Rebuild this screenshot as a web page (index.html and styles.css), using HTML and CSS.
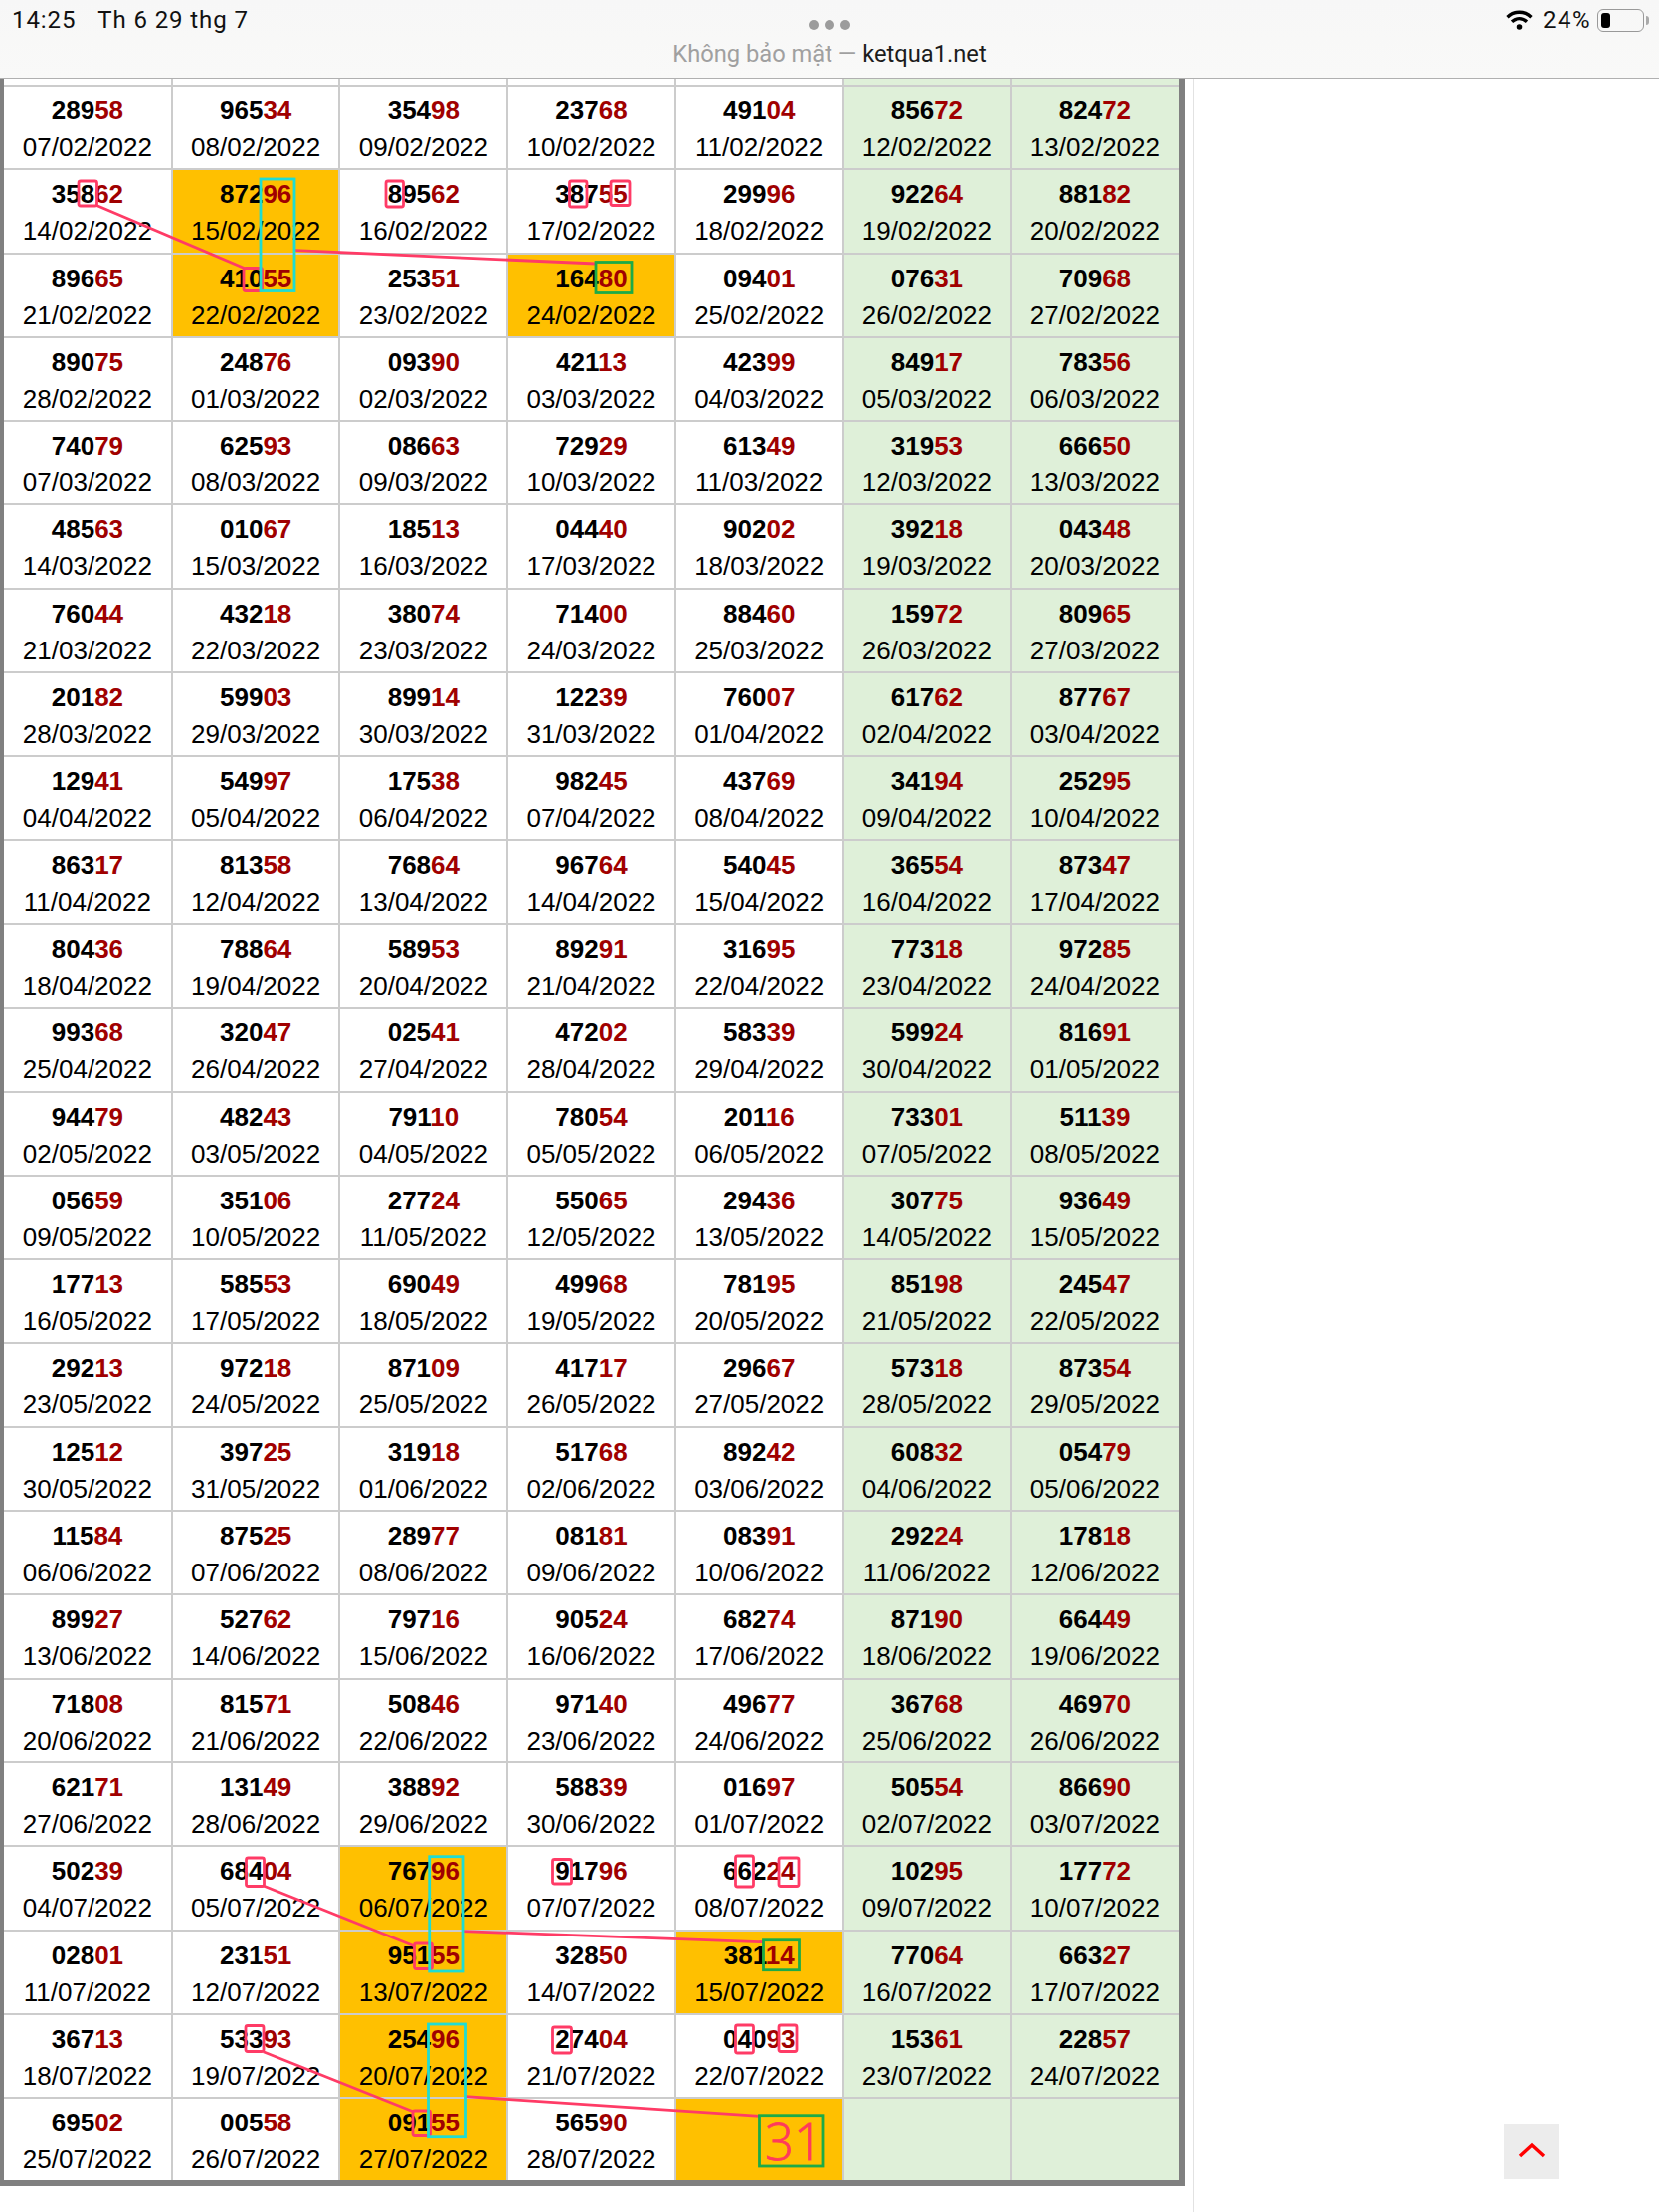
FILE: index.html
```html
<!DOCTYPE html>
<html lang="vi">
<head>
<meta charset="utf-8">
<title>ketqua1.net</title>
<link rel="stylesheet" href="styles.css">
</head>
<body>
<header class="bar">
  <div class="clock"><span>14:25</span><span>Th 6 29 thg 7</span></div>
  <div class="center">
    <div class="dots"><i></i><i></i><i></i></div>
    <div class="url">Không bảo mật — <strong>ketqua1.net</strong></div>
  </div>
  <div class="status">
    <svg class="wifi" width="27" height="20" viewBox="0 0 27 20"><path d="M1.5 7.2C8.5.6 18.5.6 25.5 7.2" /><path d="M6 11.8c4.500-4.300 10.500-4.300 15 0" /><circle cx="13.500" cy="17" r="2.800"/></svg>
    <span>24%</span>
    <div class="battery"><i></i></div>
    <div class="nub"></div>
  </div>
</header>
<main class="page">
<div class="board">
<div class="c s"></div><div class="c s"></div><div class="c s"></div><div class="c s"></div><div class="c s"></div><div class="c s g"></div><div class="c s g"></div>
<div class="c"><b>289<i>58</i></b><span>07/02/2022</span></div><div class="c"><b>965<i>34</i></b><span>08/02/2022</span></div><div class="c"><b>354<i>98</i></b><span>09/02/2022</span></div><div class="c"><b>237<i>68</i></b><span>10/02/2022</span></div><div class="c"><b>491<i>04</i></b><span>11/02/2022</span></div><div class="c g"><b>856<i>72</i></b><span>12/02/2022</span></div><div class="c g"><b>824<i>72</i></b><span>13/02/2022</span></div>
<div class="c"><b>358<i>62</i></b><span>14/02/2022</span></div><div class="c o"><b>872<i>96</i></b><span>15/02/2022</span></div><div class="c"><b>895<i>62</i></b><span>16/02/2022</span></div><div class="c"><b>387<i>55</i></b><span>17/02/2022</span></div><div class="c"><b>299<i>96</i></b><span>18/02/2022</span></div><div class="c g"><b>922<i>64</i></b><span>19/02/2022</span></div><div class="c g"><b>881<i>82</i></b><span>20/02/2022</span></div>
<div class="c"><b>896<i>65</i></b><span>21/02/2022</span></div><div class="c o"><b>410<i>55</i></b><span>22/02/2022</span></div><div class="c"><b>253<i>51</i></b><span>23/02/2022</span></div><div class="c o"><b>164<i>80</i></b><span>24/02/2022</span></div><div class="c"><b>094<i>01</i></b><span>25/02/2022</span></div><div class="c g"><b>076<i>31</i></b><span>26/02/2022</span></div><div class="c g"><b>709<i>68</i></b><span>27/02/2022</span></div>
<div class="c"><b>890<i>75</i></b><span>28/02/2022</span></div><div class="c"><b>248<i>76</i></b><span>01/03/2022</span></div><div class="c"><b>093<i>90</i></b><span>02/03/2022</span></div><div class="c"><b>421<i>13</i></b><span>03/03/2022</span></div><div class="c"><b>423<i>99</i></b><span>04/03/2022</span></div><div class="c g"><b>849<i>17</i></b><span>05/03/2022</span></div><div class="c g"><b>783<i>56</i></b><span>06/03/2022</span></div>
<div class="c"><b>740<i>79</i></b><span>07/03/2022</span></div><div class="c"><b>625<i>93</i></b><span>08/03/2022</span></div><div class="c"><b>086<i>63</i></b><span>09/03/2022</span></div><div class="c"><b>729<i>29</i></b><span>10/03/2022</span></div><div class="c"><b>613<i>49</i></b><span>11/03/2022</span></div><div class="c g"><b>319<i>53</i></b><span>12/03/2022</span></div><div class="c g"><b>666<i>50</i></b><span>13/03/2022</span></div>
<div class="c"><b>485<i>63</i></b><span>14/03/2022</span></div><div class="c"><b>010<i>67</i></b><span>15/03/2022</span></div><div class="c"><b>185<i>13</i></b><span>16/03/2022</span></div><div class="c"><b>044<i>40</i></b><span>17/03/2022</span></div><div class="c"><b>902<i>02</i></b><span>18/03/2022</span></div><div class="c g"><b>392<i>18</i></b><span>19/03/2022</span></div><div class="c g"><b>043<i>48</i></b><span>20/03/2022</span></div>
<div class="c"><b>760<i>44</i></b><span>21/03/2022</span></div><div class="c"><b>432<i>18</i></b><span>22/03/2022</span></div><div class="c"><b>380<i>74</i></b><span>23/03/2022</span></div><div class="c"><b>714<i>00</i></b><span>24/03/2022</span></div><div class="c"><b>884<i>60</i></b><span>25/03/2022</span></div><div class="c g"><b>159<i>72</i></b><span>26/03/2022</span></div><div class="c g"><b>809<i>65</i></b><span>27/03/2022</span></div>
<div class="c"><b>201<i>82</i></b><span>28/03/2022</span></div><div class="c"><b>599<i>03</i></b><span>29/03/2022</span></div><div class="c"><b>899<i>14</i></b><span>30/03/2022</span></div><div class="c"><b>122<i>39</i></b><span>31/03/2022</span></div><div class="c"><b>760<i>07</i></b><span>01/04/2022</span></div><div class="c g"><b>617<i>62</i></b><span>02/04/2022</span></div><div class="c g"><b>877<i>67</i></b><span>03/04/2022</span></div>
<div class="c"><b>129<i>41</i></b><span>04/04/2022</span></div><div class="c"><b>549<i>97</i></b><span>05/04/2022</span></div><div class="c"><b>175<i>38</i></b><span>06/04/2022</span></div><div class="c"><b>982<i>45</i></b><span>07/04/2022</span></div><div class="c"><b>437<i>69</i></b><span>08/04/2022</span></div><div class="c g"><b>341<i>94</i></b><span>09/04/2022</span></div><div class="c g"><b>252<i>95</i></b><span>10/04/2022</span></div>
<div class="c"><b>863<i>17</i></b><span>11/04/2022</span></div><div class="c"><b>813<i>58</i></b><span>12/04/2022</span></div><div class="c"><b>768<i>64</i></b><span>13/04/2022</span></div><div class="c"><b>967<i>64</i></b><span>14/04/2022</span></div><div class="c"><b>540<i>45</i></b><span>15/04/2022</span></div><div class="c g"><b>365<i>54</i></b><span>16/04/2022</span></div><div class="c g"><b>873<i>47</i></b><span>17/04/2022</span></div>
<div class="c"><b>804<i>36</i></b><span>18/04/2022</span></div><div class="c"><b>788<i>64</i></b><span>19/04/2022</span></div><div class="c"><b>589<i>53</i></b><span>20/04/2022</span></div><div class="c"><b>892<i>91</i></b><span>21/04/2022</span></div><div class="c"><b>316<i>95</i></b><span>22/04/2022</span></div><div class="c g"><b>773<i>18</i></b><span>23/04/2022</span></div><div class="c g"><b>972<i>85</i></b><span>24/04/2022</span></div>
<div class="c"><b>993<i>68</i></b><span>25/04/2022</span></div><div class="c"><b>320<i>47</i></b><span>26/04/2022</span></div><div class="c"><b>025<i>41</i></b><span>27/04/2022</span></div><div class="c"><b>472<i>02</i></b><span>28/04/2022</span></div><div class="c"><b>583<i>39</i></b><span>29/04/2022</span></div><div class="c g"><b>599<i>24</i></b><span>30/04/2022</span></div><div class="c g"><b>816<i>91</i></b><span>01/05/2022</span></div>
<div class="c"><b>944<i>79</i></b><span>02/05/2022</span></div><div class="c"><b>482<i>43</i></b><span>03/05/2022</span></div><div class="c"><b>791<i>10</i></b><span>04/05/2022</span></div><div class="c"><b>780<i>54</i></b><span>05/05/2022</span></div><div class="c"><b>201<i>16</i></b><span>06/05/2022</span></div><div class="c g"><b>733<i>01</i></b><span>07/05/2022</span></div><div class="c g"><b>511<i>39</i></b><span>08/05/2022</span></div>
<div class="c"><b>056<i>59</i></b><span>09/05/2022</span></div><div class="c"><b>351<i>06</i></b><span>10/05/2022</span></div><div class="c"><b>277<i>24</i></b><span>11/05/2022</span></div><div class="c"><b>550<i>65</i></b><span>12/05/2022</span></div><div class="c"><b>294<i>36</i></b><span>13/05/2022</span></div><div class="c g"><b>307<i>75</i></b><span>14/05/2022</span></div><div class="c g"><b>936<i>49</i></b><span>15/05/2022</span></div>
<div class="c"><b>177<i>13</i></b><span>16/05/2022</span></div><div class="c"><b>585<i>53</i></b><span>17/05/2022</span></div><div class="c"><b>690<i>49</i></b><span>18/05/2022</span></div><div class="c"><b>499<i>68</i></b><span>19/05/2022</span></div><div class="c"><b>781<i>95</i></b><span>20/05/2022</span></div><div class="c g"><b>851<i>98</i></b><span>21/05/2022</span></div><div class="c g"><b>245<i>47</i></b><span>22/05/2022</span></div>
<div class="c"><b>292<i>13</i></b><span>23/05/2022</span></div><div class="c"><b>972<i>18</i></b><span>24/05/2022</span></div><div class="c"><b>871<i>09</i></b><span>25/05/2022</span></div><div class="c"><b>417<i>17</i></b><span>26/05/2022</span></div><div class="c"><b>296<i>67</i></b><span>27/05/2022</span></div><div class="c g"><b>573<i>18</i></b><span>28/05/2022</span></div><div class="c g"><b>873<i>54</i></b><span>29/05/2022</span></div>
<div class="c"><b>125<i>12</i></b><span>30/05/2022</span></div><div class="c"><b>397<i>25</i></b><span>31/05/2022</span></div><div class="c"><b>319<i>18</i></b><span>01/06/2022</span></div><div class="c"><b>517<i>68</i></b><span>02/06/2022</span></div><div class="c"><b>892<i>42</i></b><span>03/06/2022</span></div><div class="c g"><b>608<i>32</i></b><span>04/06/2022</span></div><div class="c g"><b>054<i>79</i></b><span>05/06/2022</span></div>
<div class="c"><b>115<i>84</i></b><span>06/06/2022</span></div><div class="c"><b>875<i>25</i></b><span>07/06/2022</span></div><div class="c"><b>289<i>77</i></b><span>08/06/2022</span></div><div class="c"><b>081<i>81</i></b><span>09/06/2022</span></div><div class="c"><b>083<i>91</i></b><span>10/06/2022</span></div><div class="c g"><b>292<i>24</i></b><span>11/06/2022</span></div><div class="c g"><b>178<i>18</i></b><span>12/06/2022</span></div>
<div class="c"><b>899<i>27</i></b><span>13/06/2022</span></div><div class="c"><b>527<i>62</i></b><span>14/06/2022</span></div><div class="c"><b>797<i>16</i></b><span>15/06/2022</span></div><div class="c"><b>905<i>24</i></b><span>16/06/2022</span></div><div class="c"><b>682<i>74</i></b><span>17/06/2022</span></div><div class="c g"><b>871<i>90</i></b><span>18/06/2022</span></div><div class="c g"><b>664<i>49</i></b><span>19/06/2022</span></div>
<div class="c"><b>718<i>08</i></b><span>20/06/2022</span></div><div class="c"><b>815<i>71</i></b><span>21/06/2022</span></div><div class="c"><b>508<i>46</i></b><span>22/06/2022</span></div><div class="c"><b>971<i>40</i></b><span>23/06/2022</span></div><div class="c"><b>496<i>77</i></b><span>24/06/2022</span></div><div class="c g"><b>367<i>68</i></b><span>25/06/2022</span></div><div class="c g"><b>469<i>70</i></b><span>26/06/2022</span></div>
<div class="c"><b>621<i>71</i></b><span>27/06/2022</span></div><div class="c"><b>131<i>49</i></b><span>28/06/2022</span></div><div class="c"><b>388<i>92</i></b><span>29/06/2022</span></div><div class="c"><b>588<i>39</i></b><span>30/06/2022</span></div><div class="c"><b>016<i>97</i></b><span>01/07/2022</span></div><div class="c g"><b>505<i>54</i></b><span>02/07/2022</span></div><div class="c g"><b>866<i>90</i></b><span>03/07/2022</span></div>
<div class="c"><b>502<i>39</i></b><span>04/07/2022</span></div><div class="c"><b>684<i>04</i></b><span>05/07/2022</span></div><div class="c o"><b>767<i>96</i></b><span>06/07/2022</span></div><div class="c"><b>917<i>96</i></b><span>07/07/2022</span></div><div class="c"><b>662<i>24</i></b><span>08/07/2022</span></div><div class="c g"><b>102<i>95</i></b><span>09/07/2022</span></div><div class="c g"><b>177<i>72</i></b><span>10/07/2022</span></div>
<div class="c"><b>028<i>01</i></b><span>11/07/2022</span></div><div class="c"><b>231<i>51</i></b><span>12/07/2022</span></div><div class="c o"><b>951<i>55</i></b><span>13/07/2022</span></div><div class="c"><b>328<i>50</i></b><span>14/07/2022</span></div><div class="c o"><b>381<i>14</i></b><span>15/07/2022</span></div><div class="c g"><b>770<i>64</i></b><span>16/07/2022</span></div><div class="c g"><b>663<i>27</i></b><span>17/07/2022</span></div>
<div class="c"><b>367<i>13</i></b><span>18/07/2022</span></div><div class="c"><b>533<i>93</i></b><span>19/07/2022</span></div><div class="c o"><b>254<i>96</i></b><span>20/07/2022</span></div><div class="c"><b>274<i>04</i></b><span>21/07/2022</span></div><div class="c"><b>040<i>93</i></b><span>22/07/2022</span></div><div class="c g"><b>153<i>61</i></b><span>23/07/2022</span></div><div class="c g"><b>228<i>57</i></b><span>24/07/2022</span></div>
<div class="c"><b>695<i>02</i></b><span>25/07/2022</span></div><div class="c"><b>005<i>58</i></b><span>26/07/2022</span></div><div class="c o"><b>091<i>55</i></b><span>27/07/2022</span></div><div class="c"><b>565<i>90</i></b><span>28/07/2022</span></div><div class="c o"></div><div class="c g"></div><div class="c g"></div>
</div>
</main>
<svg class="marks" width="1668" height="2224" viewBox="0 0 1668 2224">
  <g class="pink">
    <rect x="79" y="182" width="18.500" height="25" rx="2"/>
    <rect x="245" y="269.500" width="18.500" height="23" rx="2"/>
    <rect x="388" y="182" width="17.500" height="26" rx="2"/>
    <rect x="572.500" y="182" width="17.500" height="26" rx="2"/>
    <rect x="614" y="182" width="19" height="24.500" rx="2"/>
    <path d="M96 206L245.500 269.500M297 251.700L599 265"/>
    <rect x="247.500" y="1868" width="18" height="28.500" rx="2"/>
    <rect x="416.500" y="1954" width="18" height="25.500" rx="2"/>
    <rect x="555.500" y="1869.500" width="19" height="24.500" rx="2"/>
    <rect x="739.500" y="1866" width="18" height="31" rx="2"/>
    <rect x="783" y="1868" width="20" height="28.500" rx="2"/>
    <path d="M264.700 1896L416.400 1956.700M466.300 1941.700L767.300 1952.700"/>
    <rect x="247" y="2036.500" width="18" height="26" rx="2"/>
    <rect x="415" y="2122" width="17.500" height="25.500" rx="2"/>
    <rect x="555.500" y="2038" width="19" height="26" rx="2"/>
    <rect x="739.500" y="2036" width="18" height="28" rx="2"/>
    <rect x="783" y="2036" width="18" height="26.500" rx="2"/>
    <path d="M264.700 2062.700L415 2122.700M468 2107.700L763.800 2127.300"/>
  </g>
  <g class="cyan">
    <rect x="262" y="180" width="34" height="112.500"/>
    <rect x="431.700" y="1866.700" width="34.300" height="115.300"/>
    <rect x="430.500" y="2035" width="38" height="113.700"/>
  </g>
  <g class="green">
    <rect x="599" y="263.500" width="36" height="31"/>
    <rect x="767.500" y="1950.700" width="36" height="30"/>
    <rect x="763.500" y="2126.700" width="63.500" height="51.300"/>
  </g>
  <text class="hand" x="769" y="2171.500">31</text>
</svg>
<a class="top" href="#" aria-label="Lên đầu trang"><svg width="28" height="16" viewBox="0 0 28 16"><path d="M2 14L14 3L26 14"/></svg></a>
</body>
</html>
```

FILE: styles.css
```css
* { box-sizing: border-box; }
html, body { margin: 0; padding: 0; }
body {
  position: relative;
  width: 1668px;
  height: 2224px;
  overflow: hidden;
  background: #fff;
  font-family: "Liberation Sans", Arial, sans-serif;
  color: #000;
}
.bar {
  display: grid;
  grid-template-columns: 1fr auto 1fr;
  height: 79px;
  background: linear-gradient(180deg, #f7f7f7, #f9f9f8);
  border-bottom: 1px solid #b0b0b0;
}
.clock {
  display: flex;
  gap: 22px;
  padding: 6px 0 0 12px;
  font: 400 24px/28px Roboto, sans-serif;
  letter-spacing: 0.9px;
  color: #111;
}
.center { display: flex; flex-direction: column; align-items: center; }
.dots { display: flex; gap: 6px; margin-top: 20px; }
.dots i { width: 10px; height: 10px; border-radius: 50%; background: #9c9c9c; }
.url {
  margin-top: 10px;
  font: 400 23.700px/28px Roboto, sans-serif;
  color: #a0a0a0;
}
.url strong { font-weight: 400; color: #1c1c1c; }
.status {
  display: flex;
  justify-content: flex-end;
  align-items: flex-start;
  padding: 6px 10px 0 0;
  font: 400 24px/28px Roboto, sans-serif;
  letter-spacing: 1.500px;
  color: #111;
}
.wifi { margin: 4px 10px 0 0; }
.wifi path { fill: none; stroke: #000; stroke-width: 3.400; stroke-linecap: butt; }
.battery {
  width: 47px;
  height: 23px;
  margin: 3px 0 0 6px;
  padding: 3px;
  border: 1.500px solid #999;
  border-radius: 6px;
}
.battery i { display: block; width: 9px; height: 15px; border-radius: 3px; background: #000; }
.nub { width: 3px; height: 9px; margin: 10px 0 0 2px; background: #aaa; border-radius: 0 3px 3px 0; }

.page {
  width: 1199.500px;
  height: 2145px;
  border-right: 1.500px solid #e2e2e2;
}
.board {
  display: grid;
  grid-template-columns: 167.800px repeat(5, 166.700px) 167.400px;
  grid-template-rows: 6px repeat(25, 82.300px);
  gap: 2px;
  width: 1191.200px;
  background: #ccc;
  border-left: 4.500px solid #808080;
  border-right: 6px solid #808080;
  border-bottom: 6px solid #808080;
}
.c {
  padding-top: 6px;
  background: #fff;
  text-align: center;
  font-size: 26px;
  line-height: 37px;
  overflow: hidden;
}
.s { padding: 0; }
.c b, .c span { display: block; }
.c b { font-weight: 700; }
.c i { font-style: normal; color: #a00000; }
.o { background: #ffc000; }
.g { background: #dff0d9; }

.marks { position: absolute; left: 0; top: 0; pointer-events: none; }
.marks rect, .marks path { fill: none; stroke-width: 2.800; }
.pink rect, .pink path { stroke: #ff3b66; }
.cyan rect { stroke: #1fdcd2; }
.green rect { stroke: #1bab48; }
.hand {
  font: 300 51px "Open Sans", sans-serif;
  fill: #ff3b5c;
  stroke: #ff3b5c;
  stroke-width: 0.800px;
}
.top {
  position: absolute;
  left: 1512px;
  top: 2136px;
  width: 55px;
  height: 55px;
  display: flex;
  align-items: center;
  justify-content: center;
  padding: 0 0 3px;
  background: #ececec;
}
.top path { fill: none; stroke: #f00; stroke-width: 3.500; }
```
